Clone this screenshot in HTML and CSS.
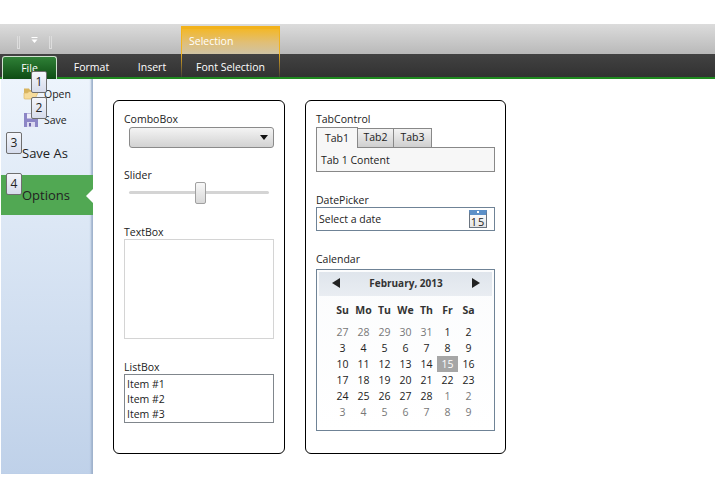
FILE: index.html
```html
<!DOCTYPE html>
<html lang="en">
<head>
    <meta charset="UTF-8">
    <title>Ribbon Backstage</title>
    <link rel="stylesheet" href="styles.css">
</head>
<body>
    <div class="title-bar">
        <div class="qat">
            <span class="grip"></span>
            <svg class="qat-arrow" width="7" height="7" viewBox="0 0 7 7"><rect x="0.5" y="0" width="6" height="1" fill="#fff"/><path d="M0.5 2.5h6L3.5 6z" fill="#fff"/></svg>
            <span class="grip"></span>
        </div>
        <div class="context-tab">Selection</div>
    </div>
    <nav class="tabs">
        <a class="tab file-tab">File</a>
        <a class="tab format-tab">Format</a>
        <a class="tab insert-tab">Insert</a>
        <a class="tab font-tab">Font Selection</a>
    </nav>
    <div class="main">
        <aside class="backstage">
            <div class="small-item">
                <svg class="item-icon" width="16" height="14" viewBox="0 0 16 14"><path d="M1 1.500h5l1 1.500h5v3H1z" fill="#d8b45e"/><path d="M1 11.500V6h3.500L6 4.500h9.500L12 12H2z" fill="#f6dc9c" stroke="#dcb767" stroke-width="0.7"/></svg>
                <span>Open</span>
            </div>
            <div class="small-item save-item">
                <svg class="item-icon" width="16" height="16" viewBox="0 0 16 16"><path d="M1 1h12l2 2v12H1z" fill="#8c86c6"/><rect x="4" y="1.500" width="8" height="5" fill="#eeedf8"/><rect x="4" y="10" width="8" height="5" fill="#dcdaf0"/><rect x="6" y="11" width="2" height="3.500" fill="#6e68aa"/></svg>
                <span>Save</span>
            </div>
            <div class="big-item save-as">Save As</div>
            <div class="big-item selected">Options</div>
            <span class="key-tip tip-1">1</span>
            <span class="key-tip tip-2">2</span>
            <span class="key-tip tip-3">3</span>
            <span class="key-tip tip-4">4</span>
        </aside>
        <div class="content">
            <section class="panel left-panel">
                <div class="label">ComboBox</div>
                <div class="combo"><span class="combo-arrow"></span></div>
                <div class="label slider-label">Slider</div>
                <div class="slider"><span class="slider-track"></span><span class="slider-thumb"></span></div>
                <div class="label textbox-label">TextBox</div>
                <div class="textbox"></div>
                <div class="label listbox-label">ListBox</div>
                <ul class="listbox">
                    <li>Item #1</li>
                    <li>Item #2</li>
                    <li>Item #3</li>
                </ul>
            </section>
            <section class="panel right-panel">
                <div class="label">TabControl</div>
                <div class="tab-strip">
                    <span class="mini-tab active">Tab1</span>
                    <span class="mini-tab">Tab2</span>
                    <span class="mini-tab">Tab3</span>
                </div>
                <div class="tab-body">Tab 1 Content</div>
                <div class="label picker-label">DatePicker</div>
                <div class="datepicker">
                    <span>Select a date</span>
                    <span class="cal-icon">15</span>
                </div>
                <div class="label calendar-label">Calendar</div>
                <div class="calendar">
                    <div class="cal-head">
                        <span class="arrow-left"></span>
                        <span class="cal-title">February, 2013</span>
                        <span class="arrow-right"></span>
                    </div>
                    <div class="cal-grid week-names">
                        <b>Su</b><b>Mo</b><b>Tu</b><b>We</b><b>Th</b><b>Fr</b><b>Sa</b>
                    </div>
                    <div class="cal-grid days">
                        <span class="off">27</span><span class="off">28</span><span class="off">29</span><span class="off">30</span><span class="off">31</span><span>1</span><span>2</span>
                        <span>3</span><span>4</span><span>5</span><span>6</span><span>7</span><span>8</span><span>9</span>
                        <span>10</span><span>11</span><span>12</span><span>13</span><span>14</span><span class="today">15</span><span>16</span>
                        <span>17</span><span>18</span><span>19</span><span>20</span><span>21</span><span>22</span><span>23</span>
                        <span>24</span><span>25</span><span>26</span><span>27</span><span>28</span><span class="off">1</span><span class="off">2</span>
                        <span class="off">3</span><span class="off">4</span><span class="off">5</span><span class="off">6</span><span class="off">7</span><span class="off">8</span><span class="off">9</span>
                    </div>
                </div>
            </section>
        </div>
    </div>
</body>
</html>
```

FILE: styles.css
```css
* {
    box-sizing: border-box;
}
body {
    margin: 0;
    width: 715px;
    height: 500px;
    overflow: hidden;
    background: #fff;
    color: #222;
    font-family: "Open Sans", "Noto Sans", sans-serif;
    font-size: 10.5px;
    line-height: 14px;
}
.title-bar {
    display: flex;
    height: 30px;
    margin-top: 24px;
    background: linear-gradient(#dcdcdc, #b9b9b9);
}
.qat {
    display: flex;
    align-items: center;
    gap: 11px;
    width: 181px;
    padding: 6px 0 0 17px;
}
.grip {
    width: 3px;
    height: 13px;
    border: 1px solid #ddd;
    border-top: 0;
}
.qat-arrow {
    margin-top: -4px;
}
.context-tab {
    width: 99px;
    margin-top: 2px;
    padding: 5px 0 0 7px;
    color: #fff;
    border: 1px solid #f2b21c;
    border-width: 3px 1px 0;
    background: linear-gradient(#f3b829, #e0bf78 55%, #cfc3a4);
}
.tabs {
    display: flex;
    height: 25px;
    background: linear-gradient(#424242, #323232);
    border-bottom: 2px solid #1f8a1f;
    color: #fff;
}
.tab {
    display: block;
    padding-top: 6px;
    text-align: center;
}
.file-tab {
    width: 55px;
    height: 24px;
    margin: 2px 0 0 2px;
    padding-top: 4px;
    border: 1px solid #cfe3cf;
    border-bottom: 0;
    border-radius: 3px 3px 0 0;
    background: linear-gradient(#2f8036, #0c4a12);
}
.format-tab {
    width: 69px;
}
.insert-tab {
    width: 52px;
}
.font-tab {
    width: 99px;
    margin-left: 3px;
    border-style: solid;
    border-width: 0 1px;
    border-image: linear-gradient(#f2b21c, #3a3a3a) 1;
}
.main {
    display: flex;
    height: 395px;
}
.backstage {
    position: relative;
    width: 92px;
    margin-left: 1px;
    padding-top: 5px;
    background: linear-gradient(#edf4fc, #bfd1e9);
    box-shadow: inset -3px 0 2px -1px #9fb2cc;
}
.small-item {
    display: flex;
    align-items: center;
    gap: 5px;
    height: 19px;
    padding-left: 22px;
}
.save-item {
    margin-top: 7px;
}
.item-icon {
    flex: none;
}
.big-item {
    height: 40px;
    padding: 12px 0 0 21px;
    font-size: 13px;
    line-height: 16px;
}
.save-as {
    height: 42px;
    margin-top: 4px;
}
.selected {
    position: relative;
    background: #51a853;
}
.selected::after {
    content: "";
    position: absolute;
    top: 14px;
    right: 0;
    border: 7px solid transparent;
    border-left-width: 0;
    border-right-color: #fff;
}
.key-tip {
    position: absolute;
    width: 16px;
    height: 22px;
    border: 1px solid #6f6f6f;
    border-radius: 2px;
    background: linear-gradient(#f4f6fb, #d6dcec);
    font-size: 12px;
    line-height: 20px;
    text-align: center;
}
.tip-1 {
    left: 30px;
    top: -8px;
}
.tip-2 {
    left: 30px;
    top: 18px;
}
.tip-3 {
    left: 5px;
    top: 53px;
}
.tip-4 {
    left: 5px;
    top: 94px;
}
.content {
    display: flex;
    gap: 20px;
    padding: 21px 0 0 20px;
}
.panel {
    height: 354px;
    border: 1px solid #000;
    border-radius: 6px;
    background: #fff;
}
.left-panel {
    width: 172px;
    padding: 11px 10px;
}
.right-panel {
    width: 201px;
    padding: 11px 10px;
}
.combo {
    position: relative;
    width: 145px;
    height: 21px;
    margin: 1px 0 0 5px;
    border: 1px solid #8a8a8a;
    border-radius: 3px;
    background: linear-gradient(#f4f4f4, #d2d2d2);
}
.combo-arrow {
    position: absolute;
    top: 7px;
    right: 5px;
    border: 4px solid transparent;
    border-top: 5px solid #111;
    border-bottom: 0;
}
.slider-label {
    margin-top: 20px;
}
.slider {
    position: relative;
    width: 140px;
    height: 22px;
    margin-left: 5px;
}
.slider-track {
    position: absolute;
    top: 9px;
    left: 0;
    right: 0;
    height: 3px;
    border-radius: 2px;
    background: #d4d4d4;
}
.slider-thumb {
    position: absolute;
    top: 0;
    left: 66px;
    width: 11px;
    height: 22px;
    border: 1px solid #a0a0a0;
    border-radius: 2px;
    background: linear-gradient(#f8f8f8, #d8d8d8);
}
.textbox-label {
    margin-top: 21px;
}
.textbox {
    width: 150px;
    height: 100px;
    border: 1px solid #d4d4d4;
}
.listbox-label {
    margin-top: 21px;
}
.listbox {
    width: 150px;
    height: 49px;
    margin: 0;
    padding: 2px;
    border: 1px solid #80868c;
    list-style: none;
}
.listbox li {
    height: 15px;
    line-height: 15px;
}
.tab-strip {
    display: flex;
    align-items: flex-end;
    height: 21px;
    padding-top: 1px;
}
.mini-tab {
    width: 37px;
    height: 19px;
    margin-left: -1px;
    border: 1px solid #888;
    border-bottom: 0;
    background: linear-gradient(#f3f3f3, #cfcfcf);
    line-height: 17px;
    text-align: center;
}
.mini-tab.active {
    position: relative;
    z-index: 1;
    width: 42px;
    height: 21px;
    margin: 0 0 -1px 0;
    background: #f7f7f7;
    line-height: 21px;
}
.mini-tab:last-child {
    width: 39px;
}
.tab-body {
    width: 179px;
    height: 25px;
    padding: 5px 4px;
    border: 1px solid #888;
    background: #f7f7f7;
}
.picker-label {
    margin-top: 21px;
}
.datepicker {
    display: flex;
    align-items: center;
    justify-content: space-between;
    width: 179px;
    height: 24px;
    padding: 0 7px 0 2px;
    border: 1px solid #6f8396;
}
.cal-icon {
    position: relative;
    width: 18px;
    height: 18px;
    border: 1px solid #6a7480;
    border-top: 5px solid #5c90c8;
    background: linear-gradient(#fafafa, #e4e4e4);
    font-size: 11px;
    letter-spacing: 1px;
    line-height: 13px;
    text-align: center;
}
.cal-icon::before {
    content: "";
    position: absolute;
    top: -4px;
    left: 7px;
    width: 2px;
    height: 2px;
    background: #fff;
}
.calendar-label {
    margin-top: 21px;
}
.calendar {
    width: 179px;
    height: 162px;
    margin-top: 3px;
    padding: 2px 2px 0;
    border: 1px solid #6f8396;
    background: linear-gradient(#fbfcfd, #fff);
}
.cal-head {
    display: flex;
    align-items: center;
    justify-content: space-between;
    height: 24px;
    padding: 0 12px 2px 13px;
    background: linear-gradient(#dfe5ec, #e9edf2);
}
.cal-title {
    font-size: 10px;
    font-weight: 700;
    color: #333;
}
.arrow-left {
    border: 5px solid transparent;
    border-right: 8px solid #222;
    border-left: 0;
}
.arrow-right {
    border: 5px solid transparent;
    border-left: 8px solid #222;
    border-right: 0;
}
.cal-grid {
    display: grid;
    grid-template-columns: repeat(7, 21px);
    padding-left: 13px;
    text-align: center;
}
.week-names {
    height: 27px;
    padding-top: 7px;
}
.week-names b {
    color: #333;
}
.days {
    grid-auto-rows: 16px;
    margin-top: 1px;
    line-height: 16px;
}
.off {
    color: #777;
}
.today {
    background: #a6a6a6;
    color: #fff;
}
```
